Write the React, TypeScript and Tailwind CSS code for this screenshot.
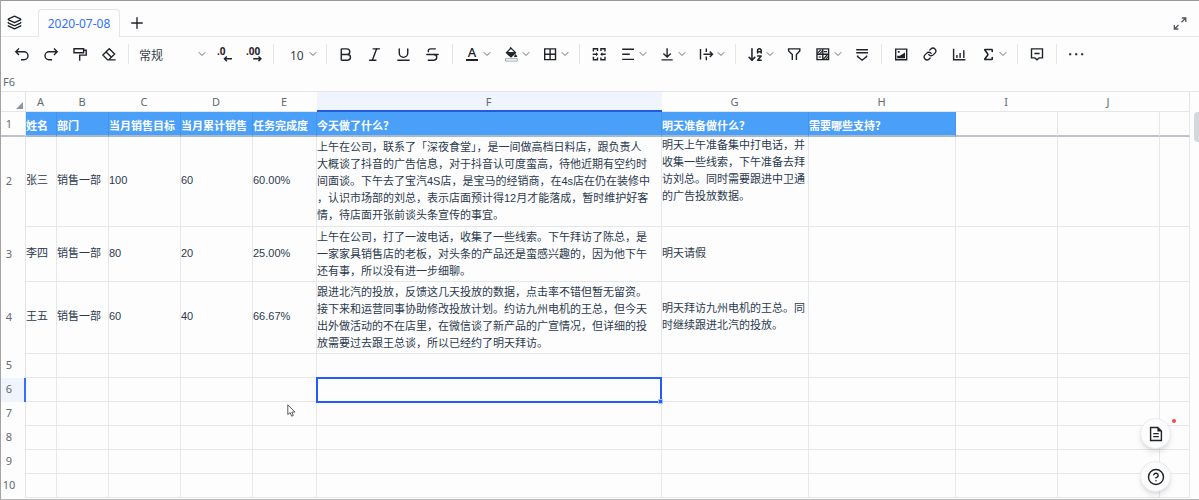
import React, { useState } from "react";
import {
  ArrowDownAZ,
  Bold,
  ChevronDown,
  CircleHelp,
  Italic,
  Layers,
  Link,
  Plus,
  Sigma,
  Strikethrough,
  Underline,
} from "lucide-react";

interface Row {
  id: number;
  height: string;
  cells: string[];
}

const columns = [
  { name: "A", width: "w-[31px]" },
  { name: "B", width: "w-[52px]" },
  { name: "C", width: "w-[72px]" },
  { name: "D", width: "w-[72px]" },
  { name: "E", width: "w-[64px]" },
  { name: "F", width: "w-[345px]" },
  { name: "G", width: "w-[147px]" },
  { name: "H", width: "w-[147px]" },
  { name: "I", width: "w-[102px]" },
  { name: "J", width: "w-[102px]" },
  { name: "", width: "w-auto" },
];

const titles = [
  "姓名",
  "部门",
  "当月销售目标",
  "当月累计销售",
  "任务完成度",
  "今天做了什么？",
  "明天准备做什么？",
  "需要哪些支持？",
];

const rows: Row[] = [
  {
    id: 2,
    height: "h-[90px]",
    cells: [
      "张三",
      "销售一部",
      "100",
      "60",
      "60.00%",
      "上午在公司，联系了「深夜食堂」，是一间做高档日料店，跟负责人\n大概谈了抖音的广告信息，对于抖音认可度蛮高，待他近期有空约时\n间面谈。下午去了宝汽4S店，是宝马的经销商，在4s店在仍在装修中\n，认识市场部的刘总，表示店面预计得12月才能落成，暂时维护好客\n情，待店面开张前谈头条宣传的事宜。",
      "明天上午准备集中打电话，并\n收集一些线索，下午准备去拜\n访刘总。同时需要跟进中卫通\n的广告投放数据。",
    ],
  },
  {
    id: 3,
    height: "h-[55px]",
    cells: [
      "李四",
      "销售一部",
      "80",
      "20",
      "25.00%",
      "上午在公司，打了一波电话，收集了一些线索。下午拜访了陈总，是\n一家家具销售店的老板，对头条的产品还是蛮感兴趣的，因为他下午\n还有事，所以没有进一步细聊。",
      "明天请假",
    ],
  },
  {
    id: 4,
    height: "h-[72px]",
    cells: [
      "王五",
      "销售一部",
      "60",
      "40",
      "66.67%",
      "跟进北汽的投放，反馈这几天投放的数据，点击率不错但暂无留资。\n接下来和运营同事协助修改投放计划。约访九州电机的王总，但今天\n出外做活动的不在店里，在微信谈了新产品的广宣情况，但详细的投\n放需要过去跟王总谈，所以已经约了明天拜访。",
      "明天拜访九州电机的王总。同\n时继续跟进北汽的投放。",
    ],
  },
  { id: 5, height: "h-6", cells: [] },
  { id: 6, height: "h-6", cells: [] },
  { id: 7, height: "h-6", cells: [] },
  { id: 8, height: "h-6", cells: [] },
  { id: 9, height: "h-6", cells: [] },
  { id: 10, height: "h-6", cells: [] },
];

// 18px drawing area shared by all the toolbar icons
const Icon: React.FC<{ children: React.ReactNode }> = ({ children }) => (
  <svg
    width="18"
    height="18"
    viewBox="0 0 18 18"
    fill="none"
    stroke="currentColor"
    strokeWidth="1.4"
    className="shrink-0"
    aria-hidden="true"
  >
    {children}
  </svg>
);

const Tool: React.FC<{ label: string; menu?: boolean; children: React.ReactNode }> = ({
  label,
  menu,
  children,
}) => (
  <button
    type="button"
    aria-label={label}
    title={label}
    className={
      menu
        ? "flex h-7 w-[39px] shrink-0 items-center pl-1.5 hover:bg-gray-100"
        : "flex h-7 w-[29px] shrink-0 items-center justify-center hover:bg-gray-100"
    }
  >
    {menu ? <span className="flex w-[18px] justify-center">{children}</span> : children}
    {menu && <ChevronDown size={12} className="shrink-0 text-[#646a73]" />}
  </button>
);

const Divider = () => (
  <div className="flex h-5 w-2.5 shrink-0 justify-center">
    <div className="w-px bg-[#e3e5e8]" />
  </div>
);

const TabBar = () => (
  <header className="flex h-9 items-end border-b border-[#e6e7ea]">
    <button type="button" aria-label="工作表列表" className="mb-1.5 ml-1.5 shrink-0">
      <Layers size={15} strokeWidth={2.2} />
    </button>
    <button
      type="button"
      className="-mb-px ml-4 h-7 w-[82px] rounded-t border border-b-0 border-[#e3e5e8] bg-[#fdfdfd] text-xs text-[#3370ff]"
    >
      2020-07-08
    </button>
    <button type="button" aria-label="新建工作表" className="mb-1 ml-2 shrink-0">
      <Plus size={18} strokeWidth={1.8} />
    </button>
    <button type="button" aria-label="全屏" className="mr-2.5 mb-1 ml-auto text-[#51565d]">
      <Icon>
        <path d="M10.5 8.2 14 4.7M10.8 4h4v4M7.5 11 4 14.5M3.3 11v4h4" strokeWidth="1.3" />
      </Icon>
    </button>
  </header>
);

const Toolbar = () => (
  <div role="toolbar" className="flex h-[35px] items-center overflow-hidden pb-px pl-1.5">
    <Tool label="撤销">
      <Icon>
        <path d="M6 3.6 2.8 6.8 6 10M3 6.8h8a4 4 0 0 1 0 8H8" />
      </Icon>
    </Tool>
    <Tool label="重做">
      <Icon>
        <path d="M12 3.6l3.2 3.2L12 10M15 6.8H7a4 4 0 0 0 0 8h3" />
      </Icon>
    </Tool>
    <Tool label="格式刷">
      <Icon>
        <path d="M3 3.7h9.6v4H3zM12.6 5.2h2.6v4.9H8.7v5.6" />
      </Icon>
    </Tool>
    <Tool label="清除格式">
      <Icon>
        <path d="M2.9 10 9.3 3.8l5.3 5.1-5.9 6H7.6zM6.1 7l5.4 5.2M8 14.9h7.6" />
      </Icon>
    </Tool>
    <Divider />
    <label className="relative block w-[77px] shrink-0">
      <select aria-label="数字格式" className="w-full appearance-none pl-1.5 text-xs text-[#3b4048]">
        <option>常规</option>
      </select>
      <ChevronDown
        size={12}
        className="pointer-events-none absolute top-1/2 right-0.5 -translate-y-1/2 text-[#646a73]"
      />
    </label>
    <Tool label="减少小数位">
      <Icon>
        <text x="1" y="9.6" fontSize="10" fontWeight="700" fill="currentColor" stroke="none">
          .0
        </text>
        <path d="M16 13.8H8.5M10.8 11.4 8.4 13.8l2.4 2.4" />
      </Icon>
    </Tool>
    <Tool label="增加小数位">
      <Icon>
        <text x="1" y="9.6" fontSize="10" fontWeight="700" fill="currentColor" stroke="none">
          .00
        </text>
        <path d="M8.2 13.8h7.6M13.5 11.4l2.4 2.4-2.4 2.4" />
      </Icon>
    </Tool>
    <Divider />
    <label className="relative block w-[43px] shrink-0">
      <select aria-label="字号" className="w-full appearance-none pl-3 text-xs text-[#3b4048]">
        <option>10</option>
      </select>
      <ChevronDown
        size={12}
        className="pointer-events-none absolute top-1/2 right-0.5 -translate-y-1/2 text-[#646a73]"
      />
    </label>
    <Divider />
    <Tool label="加粗">
      <Bold size={17} />
    </Tool>
    <Tool label="斜体">
      <Italic size={17} />
    </Tool>
    <Tool label="下划线">
      <Underline size={17} />
    </Tool>
    <Tool label="删除线">
      <Strikethrough size={17} />
    </Tool>
    <Divider />
    <Tool label="字体颜色" menu>
      <Icon>
        <text x="9" y="12" fontSize="13" textAnchor="middle" fontWeight="500" fill="currentColor" stroke="none">
          A
        </text>
        <path d="M3 15h12" strokeWidth="2" />
      </Icon>
    </Tool>
    <Tool label="填充颜色" menu>
      <Icon>
        <path d="m9 3.2 4.6 4.6L9 12 4.4 7.8z" strokeWidth="1.2" />
        <path d="M4.6 7.6h8.8L9 11.8zM13.6 9.6l1.2 2h-2.4z" fill="currentColor" strokeWidth="1" />
        <path d="M8 2.6 9.4 4" />
        <path d="M3.5 13.7h11.8v2.4H3.5z" stroke="#a6abb2" strokeWidth="1" />
      </Icon>
    </Tool>
    <Tool label="边框" menu>
      <Icon>
        <path d="M3.7 3.9h10.8v10.7H3.7zM9.1 4v10.6M3.7 9.2h10.8" />
      </Icon>
    </Tool>
    <Divider />
    <Tool label="合并单元格">
      <Icon>
        <path d="M3.4 6.6V3.7h3.4M11.6 3.7H15v2.9M3.4 11.8v3h3.4M11.6 14.8H15v-3M7.5 3v3M10.9 3v3M7.5 12.5v3M10.9 12.5v3M2.7 9.2H7M15.7 9.2h-4.3" />
        <path d="M6 7.2 8.2 9.2 6 11.2zM12.4 7.2l-2.2 2 2.2 2z" fill="currentColor" stroke="none" />
      </Icon>
    </Tool>
    <Tool label="水平对齐" menu>
      <Icon>
        <path d="M3.2 4.2H15M3.2 9.3h7.6M3.2 14.4H15" />
      </Icon>
    </Tool>
    <Tool label="垂直对齐" menu>
      <Icon>
        <path d="M3.5 14.9h11.2M9.1 3.3v8.6M5.4 8.5l3.7 3.6 3.7-3.6" />
      </Icon>
    </Tool>
    <Tool label="文本换行" menu>
      <Icon>
        <path d="M3.5 4v10.6M9.3 3.4V7M9.3 11.6v3.6M6.5 9.3h9M12.8 6.6l2.7 2.7-2.7 2.7" />
      </Icon>
    </Tool>
    <Divider />
    <Tool label="排序" menu>
      <ArrowDownAZ size={17} strokeWidth={2.2} />
    </Tool>
    <Tool label="筛选">
      <Icon>
        <path d="M7.3 15V9.6L3.6 6V3.9h11.2V6l-3.4 3.6V15" />
      </Icon>
    </Tool>
    <Tool label="条件格式" menu>
      <Icon>
        <path d="M3 3.9h11.6v10.7H3zM8.8 4v10.6M3 9.2h11.6" />
        <path d="M3.4 8.4 7 4.6M5.6 8.8l3-3.2M9.4 14l3.8-4M11.8 14.2l2.6-2.8M10 6.6h3M4.6 12h2.6" strokeWidth="1.1" />
      </Icon>
    </Tool>
    <Tool label="数据验证">
      <Icon>
        <path d="M3.2 4.8H15M3.2 7.8H15M4.6 10.6v1l4.5 3.6 4.5-3.6v-1" />
      </Icon>
    </Tool>
    <Divider />
    <Tool label="图片">
      <Icon>
        <path d="M3.7 4.1h11v10.6h-11z" />
        <path d="M5.2 13.2v-2.4l2.6 0 5.2-3.4v5.8zM5.8 6h1.8v1.8H5.8z" fill="currentColor" stroke="none" />
      </Icon>
    </Tool>
    <Tool label="链接">
      <Link size={14} strokeWidth={2.3} />
    </Tool>
    <Tool label="图表">
      <Icon>
        <path d="M3.6 3.8v10.9h11.8M6.9 10v3M10.1 8v5M13.8 5.2V13" />
      </Icon>
    </Tool>
    <Tool label="函数" menu>
      <Sigma size={15} strokeWidth={2.6} />
    </Tool>
    <Divider />
    <Tool label="评论">
      <Icon>
        <path d="M3.5 3.9h11v9h-3.4L9 14.8l-2.1-1.9H3.5zM6.4 8.5h5.2" />
      </Icon>
    </Tool>
    <Divider />
    <Tool label="更多">
      <Icon>
        <path d="M2.2 9.3h2M8.2 9.3h2M14.2 9.3h2" strokeWidth="2" />
      </Icon>
    </Tool>
  </div>
);

const Sheet = () => (
  <table className="w-full table-fixed border-separate border-spacing-0 text-left text-[11px] leading-[17px]">
    <colgroup>
      <col className="w-[25px]" />
      {columns.map((col, i) => (
        <col key={i} className={col.width} />
      ))}
    </colgroup>
    <thead>
      <tr className="h-5 text-center text-[#646a73]">
        <th className="border-r border-b border-[#e3e5e8] p-0 align-bottom">
          <svg width="7" height="7" viewBox="0 0 7 7" className="mr-0.5 mb-0.5 ml-auto block" aria-hidden="true">
            <path d="M7 0v7H0z" fill="#8f959e" />
          </svg>
        </th>
        {columns.map((col, i) => (
          <th
            key={i}
            scope="col"
            className={
              col.name === "F"
                ? "border-b-2 border-[#245bdb] bg-[#f0f4ff] p-0 pr-0.5 font-normal"
                : i === columns.length - 1
                  ? "border-r border-b border-[#e3e5e8] p-0 font-normal"
                  : "border-b border-[#e3e5e8] p-0 pr-0.5 font-normal"
            }
          >
            {col.name}
          </th>
        ))}
      </tr>
      <tr className="h-[25px]">
        <th
          scope="row"
          className="border-r border-b-2 border-r-[#e3e5e8] border-b-[#bfc3c9] p-0 pr-2 text-center font-normal text-[#646a73]"
        >
          1
        </th>
        {columns.map((col, i) =>
          titles[i] ? (
            <th
              key={i}
              className="border-r border-b-2 border-r-[#4593ea] border-b-[#a9b9cc] bg-[#4a9ff9] p-0 pt-1 font-bold whitespace-nowrap text-white"
            >
              {titles[i]}
            </th>
          ) : (
            <td key={i} className="border-r border-b-2 border-r-[#e6e7ea] border-b-[#bfc3c9] p-0" />
          )
        )}
      </tr>
    </thead>
    <tbody className="font-['Liberation_Sans','Noto_Sans_CJK_SC',sans-serif] text-[#2b3a4d]">
      {rows.map((row) => (
        <tr key={row.id} className={row.height}>
          <th
            scope="row"
            className={
              row.id === 6
                ? "border-r-2 border-[#3370ff] bg-[#f0f4ff] p-0 pr-[7px] pb-[3px] text-center font-['Noto_Sans',sans-serif] font-normal text-[#646a73]"
                : "border-r border-[#e3e5e8] p-0 pr-2 pb-[3px] text-center font-['Noto_Sans',sans-serif] font-normal text-[#646a73]"
            }
          >
            {row.id}
          </th>
          {columns.map((col, i) => (
            <td
              key={i}
              className={
                row.id === 2 && col.name === "G"
                  ? "border-r border-b border-[#e6e7ea] p-0 align-top whitespace-pre"
                  : col.name === "F"
                    ? "relative border-r border-b border-[#e6e7ea] p-0 align-middle whitespace-pre"
                    : "border-r border-b border-[#e6e7ea] p-0 pb-0.5 align-middle whitespace-pre"
              }
            >
              {row.cells[i]}
              {row.id === 6 && col.name === "F" && (
                <div className="absolute -top-px -right-px -bottom-[2px] -left-px z-10 border-2 border-[#245bff]">
                  <span className="absolute -right-[3px] -bottom-[3px] size-[5px] border border-[#a9c3ff] bg-[#245bff]" />
                </div>
              )}
            </td>
          ))}
        </tr>
      ))}
    </tbody>
  </table>
);

const App: React.FC = () => {
  const [cell, setCell] = useState("F6");

  return (
    <div className="relative flex h-screen flex-col overflow-hidden border-t border-b border-l border-t-[#98989c] border-b-[#b8b8b8] border-l-[#a3a3a3] bg-[#fdfdfd] font-['Noto_Sans','Noto_Sans_CJK_SC',sans-serif] text-[#1f2329]">
      <TabBar />
      <Toolbar />
      <div className="flex h-5 items-center border-b border-[#e3e5e8] pl-0.5">
        <input
          aria-label="单元格"
          value={cell}
          onChange={(e) => setCell(e.target.value)}
          className="w-20 bg-transparent text-[11px] leading-4 text-[#646a73] outline-none"
        />
      </div>

      {/* Grid and its scroll bar */}
      <main className="flex min-h-0 flex-1 overflow-hidden">
        <div className="min-w-0 flex-1">
          <Sheet />
        </div>
        <div className="w-[9px] shrink-0 pt-5 pl-1">
          <div className="h-[30px] rounded-l bg-[#d5d8dd]" />
        </div>
      </main>

      {/* Floating help buttons */}
      <div className="absolute right-7 bottom-[7px] z-20 flex flex-col gap-3">
        <button
          type="button"
          aria-label="文档"
          className="relative flex size-[31px] items-center justify-center rounded-full border border-[#ebecee] bg-[#fdfdfd] shadow-md"
        >
          <Icon>
            <path d="M3.6 2.5h7.2l3.6 3.6v9.4H3.6zM6.2 8.6h5.6M6.2 11.6h5.6" />
            <path d="M10.4 2.2v4.2h4.2z" fill="currentColor" stroke="none" />
          </Icon>
          <span className="absolute top-0 -right-1.5 size-1 rounded-full bg-[#f54a45]" />
        </button>
        <button
          type="button"
          aria-label="帮助"
          className="flex size-[31px] items-center justify-center rounded-full border border-[#ebecee] bg-[#fdfdfd] shadow-md"
        >
          <CircleHelp size={18} strokeWidth={1.9} />
        </button>
      </div>

      {/* Mouse pointer */}
      <svg width="9" height="13" viewBox="0 0 9 13" className="absolute top-[403px] left-[286px] z-20" aria-hidden="true">
        <path d="M.8.8v9.8l2.3-2 1.6 3.6 1.6-.7-1.5-3.4h3.1z" fill="#fff" stroke="#4a4a4a" strokeWidth=".9" />
      </svg>
    </div>
  );
};

export default App;
